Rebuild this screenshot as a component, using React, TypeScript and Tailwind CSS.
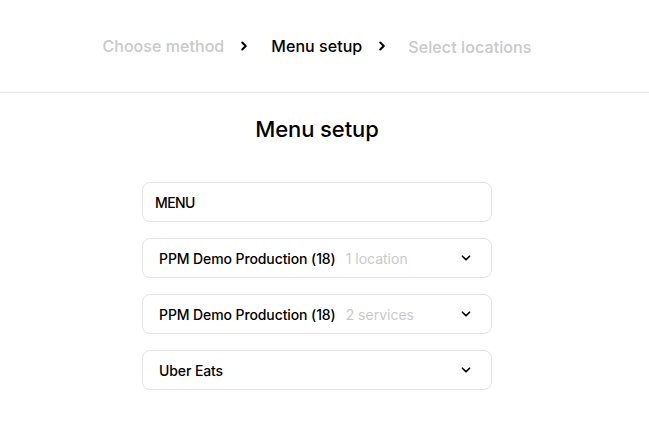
import { ChevronDown, ChevronRight } from "lucide-react";

const selects = [
	{ label: "PPM Demo Production (18)", hint: "1 location" },
	{ label: "PPM Demo Production (18)", hint: "2 services" },
	{ label: "Uber Eats", hint: "" },
];

export default function App() {
	return (
		<div className="min-h-screen w-full bg-white text-black" style={{ fontFamily: "Inter, 'Noto Sans', sans-serif" }}>
			{/* Breadcrumb */}
			<div className="w-full border-b border-[#e6e6e6]">
				<div className="flex h-[92px] w-[634px] items-center justify-center pb-[1px]">
					<span className="text-[16px] font-medium tracking-[0.05px] text-[#c9c9c9]">Choose method</span>
					<ChevronRight className="ml-[13px] mr-[20px] h-[14px] w-[14px]" strokeWidth={3.5} />
					<span className="text-[16px] font-medium tracking-[0.05px] text-black">Menu setup</span>
					<ChevronRight className="ml-[13px] mr-[19px] h-[14px] w-[14px]" strokeWidth={3.5} />
					<span className="mt-[2px] text-[16px] font-medium tracking-[0.1px] text-[#c9c9c9]">Select locations</span>
				</div>
			</div>

			<div className="flex w-[634px] flex-col items-center pt-[22px]">
				<h1 className="text-[22px] font-medium leading-[28px] tracking-[-0.1px]">Menu setup</h1>

				<div className="mt-[39px] flex w-[350px] flex-col gap-[16px]">
					<div className="flex h-[40px] items-center rounded-[8px] border border-[#e3e3e3] px-[12px]">
						<span className="text-[14px] font-medium tracking-[-0.6px]">MENU</span>
					</div>

					{selects.map((s, i) => (
						<div key={i} className="flex h-[40px] items-center rounded-[8px] border border-[#e3e3e3] pl-[16px] pr-[18px]">
							<span className="text-[14px] font-medium tracking-[-0.1px]">{s.label}</span>
							{s.hint && <span className="ml-[10px] text-[14px] text-[#c9c9c9]">{s.hint}</span>}
							<ChevronDown className="ml-auto h-[14px] w-[14px]" strokeWidth={3} />
						</div>
					))}
				</div>
			</div>
		</div>
	);
}
